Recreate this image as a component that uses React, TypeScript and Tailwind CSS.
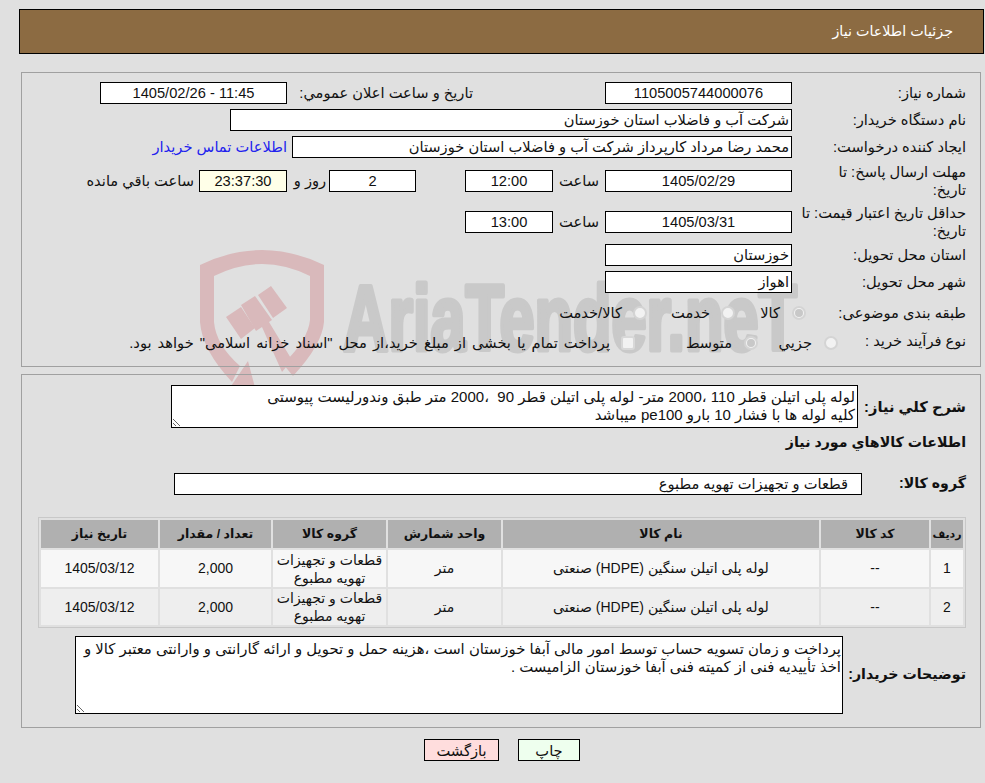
import type { ReactNode } from 'react';

const rows = [
  { id: '1', qty: '2,000', date: '1405/03/12', bg: 'bg-[#f7f7f7]', h: 'h-[37px]' },
  { id: '2', qty: '2,000', date: '1405/03/12', bg: 'bg-[#eeeeee]', h: 'h-[36px]' },
];

function Label({ children, w = 'w-[170px]' }: { children: ReactNode; w?: string }) {
  return <div className={`${w} shrink-0 leading-[18px]`}>{children}</div>;
}

function Field({ children, className = '' }: { children?: ReactNode; className?: string }) {
  return (
    <div className={`flex h-[22px] shrink-0 items-center justify-center border border-black bg-white ${className}`}>
      {children}
    </div>
  );
}

function Radio({ checked = false }: { checked?: boolean }) {
  return (
    <span className="flex h-[14px] w-[14px] shrink-0 items-center justify-center rounded-full border-2 border-[#d4d4d4] bg-[#f2f2f2]">
      {checked && <span className="h-[8px] w-[8px] rounded-full bg-[#c8c8c8]" />}
    </span>
  );
}

function Watermark() {
  return (
    <svg className="absolute left-0 top-0 h-[783px] w-[985px]" viewBox="0 0 985 783">
      <g fill="#d9b9bb">
        <path d="M200 265Q262 235 324 265V322Q322 345 293 376L283 364Q308 340 310 320V276Q262 252 214 276V322Q216 345 240 366L232 382Q202 350 200 322Z" />
        <path d="M226 317L241 307L255 328L241 339Z" />
        <path d="M241 305L255 296L272 320L269 322L292 360L282 372L262 327L256 331Z" />
        <path d="M258 295L271 286L287 308L273 318Z" />
        <path d="M248 361L257 395H225Z" />
      </g>
      <text
        x="343"
        y="350"
        direction="ltr"
        fill="#c9c9c9"
        stroke="#c9c9c9"
        strokeWidth="5"
        strokeLinejoin="round"
        textAnchor="start"
        fontFamily="'Liberation Sans', sans-serif"
        fontWeight="700"
        fontSize="92"
        textLength="454"
        lengthAdjust="spacingAndGlyphs"
      >
        AriaTender.neT
      </text>
    </svg>
  );
}

export default function App() {
  return (
    <div
      dir="rtl"
      className="relative h-[783px] w-[985px] overflow-hidden bg-[#e0e0e0] font-['Liberation_Sans','DejaVu_Sans',sans-serif] text-[14.67px] text-[#111]"
    >
      <Watermark />
      <div className="relative pt-[9px]">
        <div className="ml-[19px] mr-[1px] flex h-[45px] items-center border border-black bg-[#8c6b42] pr-[30px] pt-[1px] text-[14.3px] text-white">
          جزئیات اطلاعات نیاز
        </div>

        <div className="ml-[21px] mr-[4px] mt-[18px] flex flex-col border border-[#a0a0a0] pr-[14px] pt-[9px]">
          <div className="flex h-[22px] items-center">
            <Label>شماره نیاز:</Label>
            <Field className="mr-[4px] w-[187px]">1105005744000076</Field>
            <div className="mr-[132px] w-[180px]">تاریخ و ساعت اعلان عمومي:</div>
            <Field className="mr-[6px] w-[187px]">
              <span dir="ltr">1405/02/26 - 11:45</span>
            </Field>
          </div>
          <div className="mt-[5px] flex h-[22px] items-center">
            <Label>نام دستگاه خریدار:</Label>
            <Field className="mr-[4px] w-[562px] !justify-start pr-[2px]">شرکت آب و فاضلاب استان خوزستان</Field>
          </div>
          <div className="mt-[5px] flex h-[22px] items-center">
            <Label>ایجاد کننده درخواست:</Label>
            <Field className="mr-[4px] w-[500px] !justify-start pr-[2px]">
              محمد رضا مرداد کارپرداز شرکت آب و فاضلاب استان خوزستان
            </Field>
            <a className="mr-[5px] text-[#2222ee]">اطلاعات تماس خریدار</a>
          </div>
          <div className="mt-[5px] flex h-[36px] items-center">
            <Label>
              مهلت ارسال پاسخ: تا
              <br />
              تاریخ:
            </Label>
            <Field className="mr-[4px] w-[187px]">1405/02/29</Field>
            <div className="w-[52px] text-center">ساعت</div>
            <Field className="w-[88px]">12:00</Field>
            <Field className="mr-[49px] w-[87px]">2</Field>
            <div className="w-[38px] text-center">روز و</div>
            <Field className="mr-[4px] w-[88px] !bg-[#ffffe8]">23:37:30</Field>
            <div className="mr-[5px]">ساعت باقي مانده</div>
          </div>
          <div className="mt-[4px] flex h-[37px] items-center">
            <Label>
              حداقل تاریخ اعتبار قیمت: تا
              <br />
              تاریخ:
            </Label>
            <Field className="mr-[4px] w-[187px]">1405/03/31</Field>
            <div className="w-[52px] text-center">ساعت</div>
            <Field className="w-[88px]">13:00</Field>
          </div>
          <div className="mt-[4px] flex h-[22px] items-center">
            <Label>استان محل تحویل:</Label>
            <Field className="mr-[4px] w-[187px] !justify-start pr-[2px]">خوزستان</Field>
          </div>
          <div className="mt-[5px] flex h-[22px] items-center">
            <Label>شهر محل تحویل:</Label>
            <Field className="mr-[4px] w-[187px] !justify-start pr-[2px]">اهواز</Field>
          </div>
          <div className="mt-[5px] flex h-[30px] items-center">
            <Label w="w-[160px]">طبقه بندی موضوعی:</Label>
            <div className="flex w-[71px] items-center gap-[12px]">
              <Radio checked />
              <span>کالا</span>
            </div>
            <div className="flex w-[88px] items-center gap-[11px]">
              <Radio />
              <span>خدمت</span>
            </div>
            <div className="flex items-center gap-[11px]">
              <Radio />
              <span>کالا/خدمت</span>
            </div>
          </div>
          <div className="flex h-[38px] items-start pt-[4px]">
            <Label w="w-[128px]">نوع فرآیند خرید :</Label>
            <div className="flex w-[80px] items-center gap-[12px]">
              <Radio />
              <span>جزیي</span>
            </div>
            <div className="flex w-[123px] items-center gap-[12px]">
              <Radio checked />
              <span>متوسط</span>
            </div>
            <div className="flex items-center gap-[11px]">
              <span className="h-[14px] w-[14px] shrink-0 rounded-[3px] border-2 border-[#d8d8d8] bg-[#f2f2f2]" />
              <span className="[word-spacing:2px]">
                پرداخت تمام یا بخشی از مبلغ خرید،از محل "اسناد خزانه اسلامی" خواهد بود.
              </span>
            </div>
          </div>
        </div>

        <div className="ml-[21px] mr-[4px] mt-[7px] flex flex-col border border-[#a0a0a0] pb-[13px] pr-[14px] pt-[10px]">
          <div className="flex items-center">
            <div className="w-[108px] shrink-0 whitespace-nowrap text-[14.67px] font-bold">شرح کلي نياز:</div>
            <textarea
              readOnly
              wrap="off"
              className="h-[43px] w-[687px] overflow-hidden border border-black bg-white px-[2px] py-[2px] text-[15px] leading-[18px] outline-none"
              defaultValue={
                'لوله پلی اتیلن قطر 110 ،2000 متر- لوله پلی اتیلن قطر 90  ،2000 متر طبق وندورلیست پیوستی\nکلیه لوله ها با فشار 10 بارو pe100 میباشد'
              }
            />
          </div>
          <div className="flex h-[30px] items-center text-[14.2px] font-bold">اطلاعات کالاهاي مورد نياز</div>
          <div className="mt-[15px] flex items-center">
            <div className="w-[104px] shrink-0 whitespace-nowrap text-[14.2px] font-bold">گروه کالا:</div>
            <Field className="w-[688px] !justify-start pr-[13px]">قطعات و تجهیزات تهویه مطبوع</Field>
          </div>
          <table className="mt-[22px] w-[928px] table-fixed border-separate border-spacing-[2px] border border-[#c8c8c8] text-center text-[14px]">
            <thead>
              <tr className="h-[28px] bg-[#b0b0b0] text-[12.5px] font-bold">
                <th className="w-[32px] whitespace-nowrap text-[11px]">ردیف</th>
                <th className="w-[108px]">کد کالا</th>
                <th className="w-[316px]">نام کالا</th>
                <th className="w-[113px]">واحد شمارش</th>
                <th className="w-[113px]">گروه کالا</th>
                <th className="w-[111px]">تعداد / مقدار</th>
                <th className="w-[117px]">تاریخ نیاز</th>
              </tr>
            </thead>
            <tbody>
              {rows.map((r) => (
                <tr key={r.id} className={`${r.bg} ${r.h}`}>
                  <td>{r.id}</td>
                  <td>--</td>
                  <td>لوله پلی اتیلن سنگین (HDPE) صنعتی</td>
                  <td>متر</td>
                  <td className="leading-[18px]">
                    قطعات و تجهیزات
                    <br />
                    تهویه مطبوع
                  </td>
                  <td>{r.qty}</td>
                  <td>{r.date}</td>
                </tr>
              ))}
            </tbody>
          </table>
          <div className="mt-[8px] flex items-center">
            <div className="w-[123px] shrink-0 whitespace-nowrap text-[14.2px] font-bold">توضیحات خریدار:</div>
            <textarea
              readOnly
              wrap="off"
              className="h-[78px] w-[768px] overflow-hidden border border-black bg-white px-[1px] pt-[3px] text-[14.9px] leading-[18px] outline-none"
              defaultValue={
                'پرداخت و زمان تسویه حساب توسط امور مالی آبفا خوزستان است ،هزینه حمل و تحویل و ارائه گارانتی و وارانتی معتبر کالا و\nاخذ تأییدیه فنی از کمیته فنی آبفا خوزستان الزامیست .'
              }
            />
          </div>
        </div>

        <div className="mt-[11px] flex justify-center gap-[19px] pl-[19px]">
          <button className="h-[22px] w-[62px] border border-black bg-[#eeffee]">چاپ</button>
          <button className="h-[22px] w-[75px] border border-black bg-[#ffdddd]">بازگشت</button>
        </div>
      </div>
    </div>
  );
}
